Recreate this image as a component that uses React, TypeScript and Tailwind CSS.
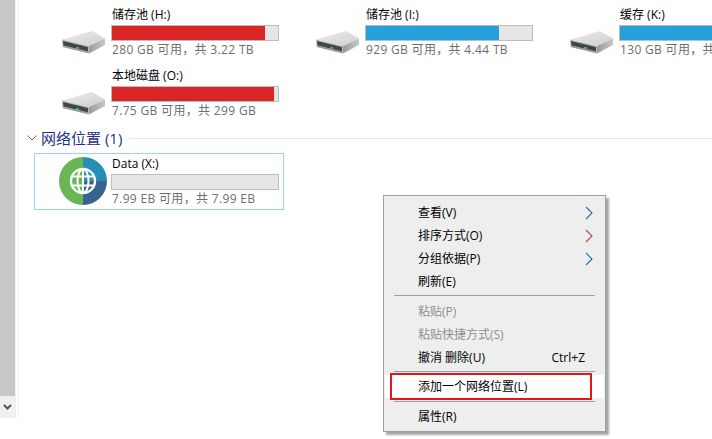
import React from 'react'

const FONT = "font-['Open_Sans','Noto_Sans_CJK_SC',sans-serif]"

interface Drive {
  title: string
  free: string
  fill: number
  color: string
}

const topDrives: Drive[] = [
  { title: '储存池 (H:)', free: '280 GB 可用，共 3.22 TB', fill: 153, color: 'bg-[#da2626]' },
  { title: '储存池 (I:)', free: '929 GB 可用，共 4.44 TB', fill: 133, color: 'bg-[#26a0da]' },
  { title: '缓存 (K:)', free: '130 GB 可用，共 1.82 TB', fill: 150, color: 'bg-[#26a0da]' },
  { title: '本地磁盘 (O:)', free: '7.75 GB 可用，共 299 GB', fill: 162, color: 'bg-[#da2626]' },
]

const HddIcon = () => (
  <svg width="48" height="48" viewBox="0 0 48 48" className="shrink-0">
    <defs>
      <linearGradient id="hddTop" x1="0" y1="0" x2="1" y2="1">
        <stop offset="0" stopColor="#ececec" />
        <stop offset="1" stopColor="#cfcfcf" />
      </linearGradient>
      <linearGradient id="hddSide" x1="0" y1="0" x2="1" y2="0">
        <stop offset="0" stopColor="#9a9a9a" />
        <stop offset="1" stopColor="#c8c8c8" />
      </linearGradient>
    </defs>
    <path d="M3 31.5 33 23 46 30.5 30 38Z" fill="url(#hddTop)" />
    <path d="M30 38 46 30.5V37L30 45.5Z" fill="url(#hddSide)" />
    <path d="M3 31.5 30 38V45.5L3.5 39Z" fill="#b8b8b8" />
    <path d="M4 33 29 39V43.5L4.5 37.5Z" fill="#434645" />
    <path d="M4.5 37.5 29 43.5V45L4 39Z" fill="#9a9a9a" />
    <rect x="17" y="39" width="3" height="2" fill="#31c24d" />
  </svg>
)

const GlobeIcon = () => (
  <svg width="48" height="48" viewBox="0 0 48 48" className="shrink-0">
    <path d="M24 0A24 24 0 0 0 24 48Z" fill="#6ab555" />
    <path d="M24 0A24 24 0 0 1 48 24H24Z" fill="#258fb5" />
    <path d="M48 24A24 24 0 0 1 24 48V24Z" fill="#36648f" />
    <circle cx="24" cy="24" r="12" fill="none" stroke="#fff" strokeWidth="2.4" />
    <ellipse cx="24" cy="24" rx="5.5" ry="12" fill="none" stroke="#fff" strokeWidth="2" />
    <path d="M24 12V36M13.5 19.5H34.5M13.5 28.5H34.5" stroke="#fff" strokeWidth="2" />
  </svg>
)

const Tile = ({
  title,
  free,
  fill,
  color,
  selected,
  icon,
}: Drive & { selected?: boolean; icon: React.ReactNode }) => (
  <div
    className={`flex h-[57px] w-[250px] shrink-0 gap-[4px] border pl-[24px] pt-[2px] ${
      selected ? 'border-[#99d1ff]' : 'border-transparent'
    }`}
  >
    <div className="mt-[1px]">{icon}</div>
    <div className="w-[168px] shrink-0">
      <div className="h-[16px] whitespace-nowrap pl-[1px] text-[12px] leading-[16px] text-black">{title}</div>
      <div className="mt-[2px] h-[16px] w-[168px] border border-[#bcbcbc] bg-[#e6e6e6]">
        <div className={`h-full ${color}`} style={{ width: fill }} />
      </div>
      <div className="mt-[1px] h-[16px] whitespace-nowrap pl-[1px] text-[12px] leading-[16px] tracking-[0.33px] text-[#6d6d6d]">
        {free}
      </div>
    </div>
  </div>
)

const MenuRow = ({
  label,
  disabled,
  shortcut,
  arrow,
  highlight,
}: {
  label: string
  disabled?: boolean
  shortcut?: string
  arrow?: string
  highlight?: boolean
}) => (
  <div
    className={`mx-[1px] flex h-[23px] items-center justify-between pl-[33px] pr-[19px] text-[12px] ${
      disabled ? 'text-[#8f8f8f]' : 'text-black'
    } ${highlight ? 'bg-white' : ''}`}
  >
    <span>{label}</span>
    {shortcut && <span>{shortcut}</span>}
    {arrow && (
      <svg width="8" height="14" viewBox="0 0 8 14" className="mr-[-8px]">
        <path d="M1 1 7 7 1 13" fill="none" stroke={arrow} strokeWidth="1.1" />
      </svg>
    )}
  </div>
)

const MenuSep = ({ h, top }: { h: string; top: string }) => (
  <div className={`${h} ${top} mx-[10px]`}>
    <div className="h-px bg-[#a0a0a0]" />
  </div>
)

export default function App() {
  return (
    <div className={`relative flex h-[439px] w-[712px] overflow-hidden bg-white ${FONT}`}>
      {/* Scrollbar */}
      <div className="flex h-[418px] w-[16px] shrink-0 flex-col bg-[#f0f0f0]">
        <div className="h-[396px] w-[15px] bg-[#c8c8c8]" />
        <div className="flex flex-1 items-center justify-center pr-[1px]">
          <svg width="9" height="7" viewBox="0 0 9 7">
            <path d="M1 1 4.5 4.5 8 1" fill="none" stroke="#555" strokeWidth="2" />
          </svg>
        </div>
      </div>
      <div className="ml-[2px] h-[418px] w-px shrink-0 bg-[#f0f0f0]" />

      {/* File area */}
      <div className="min-w-0 flex-1 pt-[4px]">
        <div className="ml-[15px] flex w-[800px] flex-wrap gap-x-[4px] gap-y-[4px]">
          {topDrives.slice(0, 3).map((d) => (
            <Tile key={d.title} {...d} icon={<HddIcon />} />
          ))}
          <Tile {...topDrives[3]} icon={<HddIcon />} />
        </div>

        <div className="ml-[8px] mt-[6px] flex h-[20px] items-center">
          <svg width="10" height="6" viewBox="0 0 10 6" className="shrink-0">
            <path d="M.5.5 5 5 9.5.5" fill="none" stroke="#6d6d6d" />
          </svg>
          <span className="ml-[4px] whitespace-nowrap text-[15px] leading-[20px] text-[#1e3287]">网络位置 (1)</span>
          <div className="ml-[7px] h-px flex-1 bg-[#e5e5e5]" />
        </div>

        <div className="ml-[15px] mt-[5px]">
          <Tile
            title="Data (X:)"
            free="7.99 EB 可用，共 7.99 EB"
            fill={0}
            color="bg-[#26a0da]"
            selected
            icon={<GlobeIcon />}
          />
        </div>
      </div>

      {/* Context menu */}
      <div className="absolute left-[383px] top-[195px] h-[237px] w-[223px] border border-[#a0a0a0] bg-[#eeeeee] pt-[5px] shadow-[3px_3px_2px_rgba(0,0,0,0.35)]">
        <MenuRow label="查看(V)" arrow="#1f6fa8" />
        <MenuRow label="排序方式(O)" arrow="#a84a4a" />
        <MenuRow label="分组依据(P)" arrow="#1f6fa8" />
        <MenuRow label="刷新(E)" />
        <MenuSep h="h-[7px]" top="pt-[2px]" />
        <MenuRow label="粘贴(P)" disabled />
        <MenuRow label="粘贴快捷方式(S)" disabled />
        <MenuRow label="撤消 删除(U)" shortcut="Ctrl+Z" />
        <MenuSep h="h-[6px]" top="pt-[2px]" />
        <MenuRow label="添加一个网络位置(L)" highlight />
        <MenuSep h="h-[7px]" top="pt-[3px]" />
        <MenuRow label="属性(R)" />
      </div>

      {/* Red annotation box */}
      <div className="absolute left-[390px] top-[373px] h-[27px] w-[202px] border-2 border-[#e8141c]" />
    </div>
  )
}
